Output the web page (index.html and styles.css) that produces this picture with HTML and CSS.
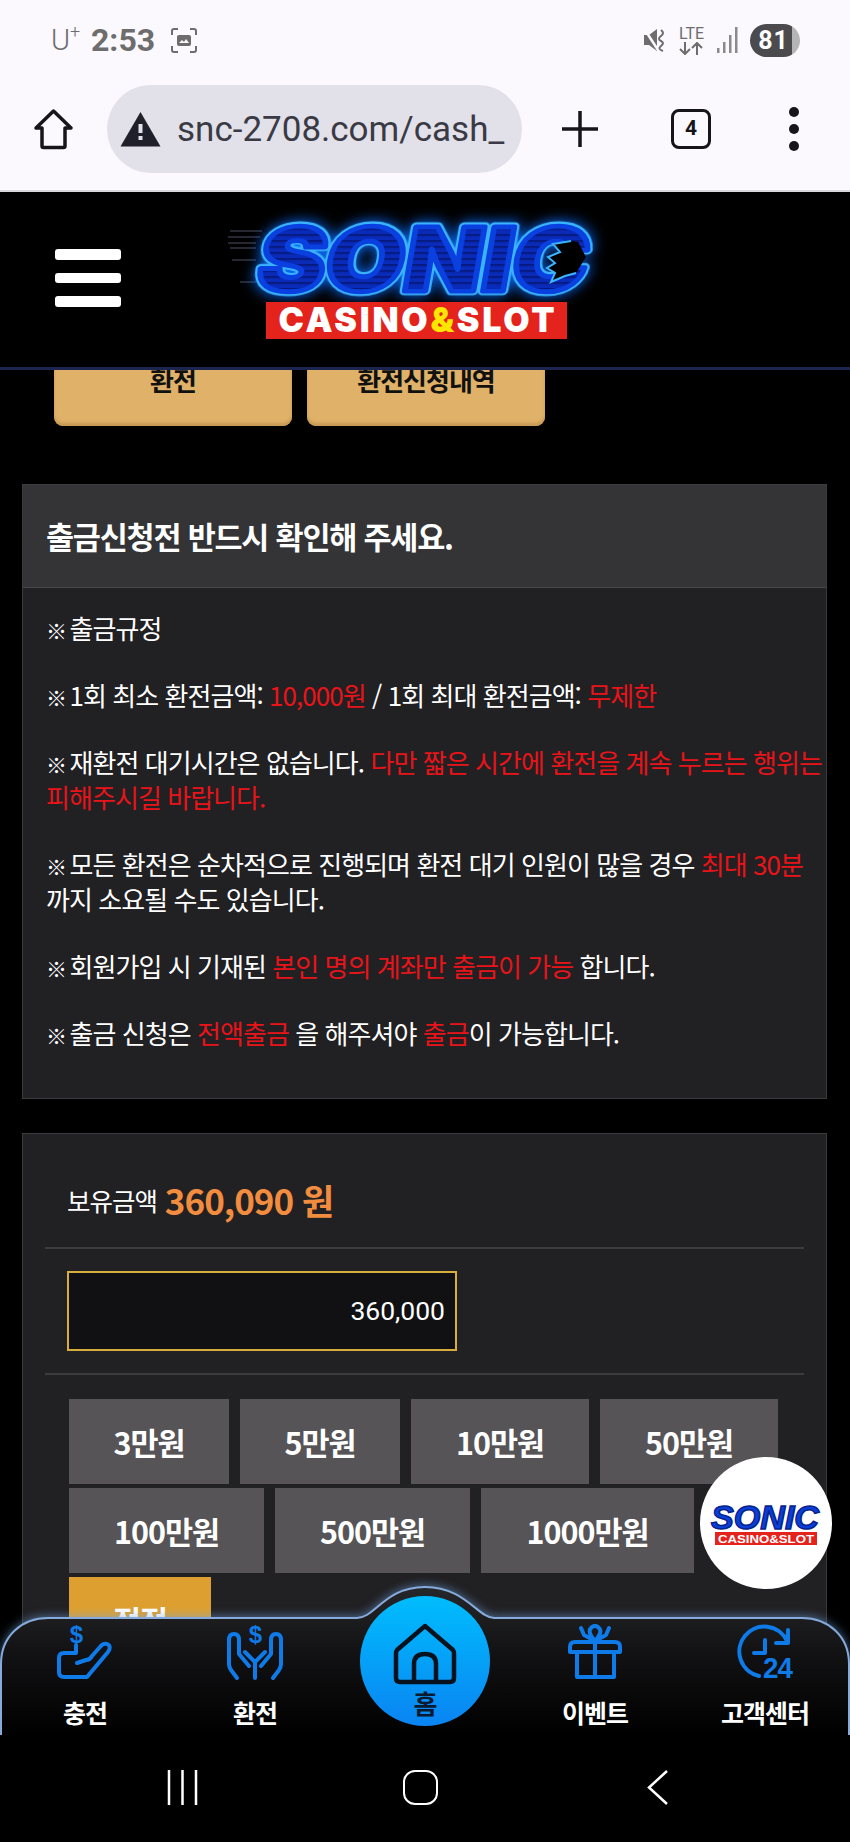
FILE: index.html
```html
<!DOCTYPE html>
<html lang="ko">
<head>
    <meta charset="UTF-8">
    <meta name="viewport" content="width=device-width, initial-scale=1.0">
    <title>SONIC CASINO&amp;SLOT</title>
    <link rel="stylesheet" href="styles.css">
</head>
<body>
<div class="screen">
    <div class="status-bar">
        <span class="carrier">U<sup>+</sup></span>
        <span class="clock">2:53</span>
        <svg class="capture" width="28" height="27" viewBox="0 0 28 27">
            <path d="M2 8V4Q2 2 4 2H8M20 2H24Q26 2 26 4V8M26 19V23Q26 25 24 25H20M8 25H4Q2 25 2 23V19" fill="none" stroke="#6d6d6d" stroke-width="2"/>
            <rect x="7" y="8" width="14" height="11" rx="2" fill="#6d6d6d"/>
            <path d="M9 16l3-3 2 2 2-3 3 4z" fill="#fafafa"/>
        </svg>
        <div class="status-right">
            <svg width="24" height="26" viewBox="0 0 24 26">
                <path d="M1 8H6L14 2V24L6 18H1Z" fill="#6d6d6d"/>
                <path d="M2 3L15 23" stroke="#fbf9fe" stroke-width="2.500"/>
                <path d="M18 3Q22 6 18 9T18 14T18 19T20 24" fill="none" stroke="#6d6d6d" stroke-width="2"/>
            </svg>
            <div class="lte">
                LTE
                <svg width="26" height="13" viewBox="0 0 26 13">
                    <path d="M7 0V12M2 7L7 12L12 7M19 13V1M14 6L19 1L24 6" fill="none" stroke="#6d6d6d" stroke-width="2"/>
                </svg>
            </div>
            <svg width="23" height="28" viewBox="0 0 23 28">
                <rect x="1" y="22" width="2.500" height="5" fill="#8a8a8a"/>
                <rect x="7" y="16" width="2.500" height="11" fill="#8a8a8a"/>
                <rect x="13" y="9" width="2.500" height="18" fill="#8a8a8a"/>
                <rect x="19" y="1" width="2.500" height="26" fill="#8a8a8a"/>
            </svg>
            <div class="battery">81</div>
        </div>
    </div>

    <div class="toolbar">
        <svg class="tb-home" width="41" height="42" viewBox="0 0 41 42">
            <path d="M20.500 3L3 20H9V38Q9 39.500 10.500 39.500H30.500Q32 39.500 32 38V20H38Z" fill="none" stroke="#16161a" stroke-width="3.500" stroke-linejoin="round"/>
        </svg>
        <div class="url-pill">
            <svg width="41" height="36" viewBox="0 0 41 36">
                <path d="M20.500 1L40.500 35.500H.5Z" fill="#20202a"/>
                <rect x="18.500" y="13" width="4" height="9" fill="#e2e1ea"/>
                <rect x="18.500" y="25" width="4" height="4" fill="#e2e1ea"/>
            </svg>
            <span class="url-text">snc-2708.com/cash_</span>
        </div>
        <svg class="tb-plus" width="36" height="36" viewBox="0 0 36 36">
            <path d="M18 0V36M0 18H36" stroke="#16161a" stroke-width="3.500"/>
        </svg>
        <div class="tab-count">4</div>
        <div class="tb-dots"><i></i><i></i><i></i></div>
    </div>

    <header class="site-header">
        <div class="hamburger"><i></i><i></i><i></i></div>
        <svg class="logo" width="390" height="135" viewBox="0 0 390 135">
            <defs>
                <pattern id="scan" width="6" height="6" patternUnits="userSpaceOnUse">
                    <rect width="6" height="6" fill="#0a2ab8"/>
                    <rect width="6" height="2" fill="#061a80"/>
                </pattern>
                <text id="sonicWord" x="33" y="81" font-size="88" textLength="330" lengthAdjust="spacingAndGlyphs">SONIC</text>
            </defs>
            <g class="speed-lines">
                <path d="M10 21H42M8 27H40M8 33H36M10 38H36M12 50H36M20 72H36"/>
            </g>
            <g transform="translate(15 0) skewX(-10)">
                <g class="sonic-glow">
                    <use href="#sonicWord" class="word-outline"/>
                </g>
                <use href="#sonicWord" class="word-fill"/>
            </g>
            <path class="c-notch" d="M358 32L351 31L333 34L340 42L328 47L335 53L327 58L335 63L331 72L345 66L356 63L366 47Z"/>
            <path class="c-notch-edge" d="M351 31L333 34L340 42L328 47L335 53L327 58L335 63L331 72L345 66L356 63"/>
            <rect class="tag" x="46" y="92" width="301" height="37"/>
            <text class="tag-text" x="196.500" y="122" text-anchor="middle" textLength="276" lengthAdjust="spacing">CASINO<tspan class="tag-amp">&amp;</tspan>SLOT</text>
        </svg>
    </header>

    <main class="content">
        <div class="top-buttons">
            <a class="gold-btn">환전</a>
            <a class="gold-btn">환전신청내역</a>
        </div>

        <section class="panel notice">
            <h2 class="panel-title">출금신청전 반드시 확인해 주세요.</h2>
            <div class="notice-body">
                <p><span class="mark">※</span>출금규정</p>
                <p><span class="mark">※</span>1회 최소 환전금액: <em>10,000원</em> / 1회 최대 환전금액: <em>무제한</em></p>
                <p><span class="mark">※</span>재환전 대기시간은 없습니다. <em>다만 짧은 시간에 환전을 계속 누르는 행위는 피해주시길 바랍니다.</em></p>
                <p><span class="mark">※</span>모든 환전은 순차적으로 진행되며 환전 대기 인원이 많을 경우 <em>최대 30분</em> 까지 소요될 수도 있습니다.</p>
                <p><span class="mark">※</span>회원가입 시 기재된 <em>본인 명의 계좌만 출금이 가능</em> 합니다.</p>
                <p><span class="mark">※</span>출금 신청은 <em>전액출금</em> 을 해주셔야 <em>출금</em>이 가능합니다.</p>
            </div>
        </section>

        <section class="panel cash">
            <div class="balance"><span>보유금액</span> <strong>360,090 원</strong></div>
            <div class="amount-row"><div class="amount-input">360,000</div></div>
            <div class="chips">
                <div class="chip-row">
                    <a class="chip w160">3만원</a>
                    <a class="chip w160">5만원</a>
                    <a class="chip w178">10만원</a>
                    <a class="chip w178">50만원</a>
                </div>
                <div class="chip-row">
                    <a class="chip w195">100만원</a>
                    <a class="chip w195">500만원</a>
                    <a class="chip w213">1000만원</a>
                </div>
                <div class="chip-row">
                    <a class="chip reset">정정</a>
                </div>
            </div>
        </section>
    </main>

    <div class="float-logo">
        <svg width="118" height="46" viewBox="0 0 118 46">
            <text class="mini-word" x="4" y="29" font-size="34" textLength="108" lengthAdjust="spacingAndGlyphs">SONIC</text>
            <rect class="tag" x="8" y="32" width="102" height="13"/>
            <text class="mini-tag" x="59" y="43" text-anchor="middle" textLength="96" lengthAdjust="spacingAndGlyphs">CASINO&amp;SLOT</text>
        </svg>
    </div>

    <nav class="bottom-nav">
        <svg class="nav-shape" width="850" height="149" viewBox="0 0 850 149">
            <defs>
                <linearGradient id="navBg" x1="0" y1="0" x2="0" y2="1">
                    <stop offset="0" stop-color="#26272a"/>
                    <stop offset="0.45" stop-color="#121214"/>
                    <stop offset="1" stop-color="#000"/>
                </linearGradient>
            </defs>
            <path d="M1 149V78C1 50 22 32 48 32H357C375 32 385 1 425 1C465 1 478 32 494 32H802C828 32 849 50 849 78V149" fill="url(#navBg)" stroke="#86aadb" stroke-width="2"/>
        </svg>
        <a class="nav-item">
            <svg class="nav-icon" width="60" height="56" viewBox="15 14 60 56">
                <text x="36" y="33" text-anchor="middle" class="ic-dollar">$</text>
                <path d="M36 35V43H24Q19 43 19 48V62Q19 67 24 67H47L68 42Q72 36 67 34Q63 33 60 37L52 46Q50 50 46 50L37 53"/>
            </svg>
            <span>충전</span>
        </a>
        <a class="nav-item">
            <svg class="nav-icon" width="60" height="56" viewBox="185 14 60 56">
                <text x="215" y="33" text-anchor="middle" class="ic-dollar">$</text>
                <path d="M197 68L191 60Q189 57 189 54V30Q189 24 194 24Q199 24 199 30V44L209 56M233 68L239 60Q241 57 241 54V30Q241 24 236 24Q231 24 231 30V44L221 56M215 68V52L205 42M215 52L225 42"/>
            </svg>
            <span>환전</span>
        </a>
        <a class="nav-item home">
            <div class="home-circle">
                <svg width="130" height="98" viewBox="10 14 130 98">
                    <path d="M75 44L47 68Q46 69 46 72V96Q46 100 50 100H100Q104 100 104 96V72Q104 69 103 68ZM64 100V82Q64 72 75 72Q86 72 86 82V100"/>
                </svg>
                <span>홈</span>
            </div>
        </a>
        <a class="nav-item">
            <svg class="nav-icon" width="60" height="56" viewBox="15 14 60 56">
                <path d="M25 42H20V37Q20 32 25 32H65Q70 32 70 37V42ZM27 43V67H64V43M45 32V67M45 31L34 25L31 18M45 31L56 25L59 18M45 31Q37 22 41 18Q45 14 49 18Q53 22 45 31"/>
            </svg>
            <span>이벤트</span>
        </a>
        <a class="nav-item">
            <svg class="nav-icon" width="60" height="56" viewBox="185 14 60 56">
                <path d="M237 31A25 25 0 1 0 209 66M238 20V33H226M215 30V43H204"/>
                <text x="213" y="68" class="ic-24" textLength="29" lengthAdjust="spacingAndGlyphs">24</text>
            </svg>
            <span>고객센터</span>
        </a>
    </nav>

    <div class="system-nav">
        <svg class="sys-recents" width="31" height="35" viewBox="0 0 31 35">
            <path d="M2 0V35M15.500 0V35M29 0V35" stroke="#fff" stroke-width="2.500"/>
        </svg>
        <div class="sys-home"></div>
        <svg class="sys-back" width="22" height="35" viewBox="0 0 22 35">
            <path d="M20 1L2 17.500L20 34" fill="none" stroke="#fff" stroke-width="2.500"/>
        </svg>
    </div>
</div>
</body>
</html>
```

FILE: styles.css
```css
* {
    box-sizing: border-box;
}
html, body {
    margin: 0;
    padding: 0;
    background-color: #000;
}
.screen {
    position: relative;
    display: flex;
    flex-direction: column;
    width: 850px;
    height: 1842px;
    overflow: hidden;
    font-family: "Noto Sans CJK KR", "Noto Sans", sans-serif;
    color: #fff;
}

/* phone status bar */
.status-bar {
    display: flex;
    align-items: center;
    height: 80px;
    padding-left: 51px;
    background-color: #fbf9fe;
    color: #6d6d6d;
    font-family: "Roboto", sans-serif;
}
.carrier {
    font-size: 29px;
    font-weight: 300;
    width: 40px;
}
.carrier sup {
    font-size: 18px;
    line-height: 0;
    vertical-align: 12px;
}
.clock {
    font-size: 32px;
    font-weight: 700;
    width: 79px;
}
.status-right {
    display: flex;
    align-items: center;
    margin-left: auto;
    margin-right: 50px;
    gap: 11px;
}
.lte {
    width: 27px;
    font-size: 16px;
    line-height: 16px;
    text-align: center;
}
.lte svg {
    display: block;
}
.battery {
    width: 50px;
    height: 33px;
    border-radius: 17px;
    background: linear-gradient(90deg, #4b4b4d 84%, #b5b5b5 84%);
    color: #fff;
    font-size: 25px;
    font-weight: 700;
    line-height: 33px;
    text-align: center;
    letter-spacing: 1px;
    padding-right: 3px;
}

/* browser toolbar */
.toolbar {
    display: flex;
    align-items: center;
    height: 112px;
    padding: 6px 0 18px 33px;
    background-color: #fbf9fe;
    border-bottom: 2px solid #d8d8da;
}
.url-pill {
    display: flex;
    align-items: center;
    width: 415px;
    height: 88px;
    margin-left: 33px;
    padding-left: 13px;
    gap: 16px;
    border-radius: 44px;
    background-color: #e2e1ea;
    overflow: hidden;
}
.url-text {
    font-family: "Roboto", sans-serif;
    font-size: 35px;
    color: #3a3a44;
    white-space: nowrap;
}
.tb-plus {
    margin-left: 40px;
}
.tab-count {
    width: 40px;
    height: 40px;
    margin-left: 73px;
    border: 3.5px solid #16161a;
    border-radius: 8px;
    color: #16161a;
    font-family: "Roboto", sans-serif;
    font-size: 21px;
    font-weight: 700;
    line-height: 33px;
    text-align: center;
}
.tb-dots {
    display: flex;
    flex-direction: column;
    gap: 7px;
    margin-left: 78px;
}
.tb-dots i {
    display: block;
    width: 10px;
    height: 10px;
    border-radius: 50%;
    background-color: #16161a;
}

/* site header */
.site-header {
    position: relative;
    z-index: 2;
    display: flex;
    align-items: flex-start;
    height: 178px;
    padding-left: 55px;
    background-color: #000;
    border-bottom: 3px solid #1c2450;
}
.hamburger {
    display: flex;
    flex-direction: column;
    gap: 13px;
    margin-top: 57px;
}
.hamburger i {
    display: block;
    width: 66px;
    height: 10.5px;
    border-radius: 3px;
    background-color: #fff;
}
.logo {
    margin: 18px 0 0 99px;
    overflow: visible;
}
.speed-lines path {
    fill: none;
    stroke: #4a5060;
    stroke-width: 1;
}
#sonicWord {
    font-family: "Inter", "Liberation Sans", sans-serif;
    font-weight: 900;
}
.sonic-glow {
    filter: drop-shadow(0 0 7px #0a6cff);
}
.word-outline {
    fill: #3ab4ff;
    stroke: #3ab4ff;
    stroke-width: 9;
    stroke-linejoin: round;
}
.word-fill {
    fill: url(#scan);
    stroke: #0a3fe0;
    stroke-width: 5;
    stroke-linejoin: round;
}
.c-notch {
    fill: #000;
}
.c-notch-edge {
    fill: none;
    stroke: #3ab4ff;
    stroke-width: 2;
}
.tag {
    fill: #e5231d;
}
.tag-text {
    font-family: "Inter", "Liberation Sans", sans-serif;
    font-size: 34px;
    font-weight: 900;
    fill: #fff;
}
.tag-amp {
    fill: #ffe600;
}

/* page content */
.content {
    flex: 1;
    margin-top: -35px;
    min-height: 0;
}
.top-buttons {
    display: flex;
    gap: 15px;
    padding-left: 54px;
}
.gold-btn {
    display: flex;
    align-items: center;
    justify-content: center;
    width: 238px;
    height: 91px;
    padding-bottom: 2px;
    border-radius: 9px;
    background-color: #dfb169;
    box-shadow: inset 0 -3px 3px #c79a55;
    color: #111;
    font-size: 26px;
    font-weight: 700;
    letter-spacing: -1px;
}
.panel {
    width: 805px;
    margin-left: 22px;
    border: 1px solid #3b3b3e;
    background-color: #212023;
}
.notice {
    margin-top: 58px;
}
.panel-title {
    display: flex;
    align-items: center;
    height: 103px;
    margin: 0;
    padding-left: 23px;
    background-color: #343437;
    border-bottom: 1px solid #47474a;
    font-size: 30.5px;
    font-weight: 700;
    letter-spacing: -1.2px;
}
.notice-body {
    padding: 22px 2px 16px 23px;
}
.notice-body p {
    margin: 0 0 32px;
    font-size: 26px;
    line-height: 35px;
    letter-spacing: -0.95px;
    word-break: keep-all;
}
.notice-body em {
    font-style: normal;
    color: #e8141a;
}
.mark {
    display: inline-block;
    width: 23.5px;
    font-size: 21px;
    font-weight: 700;
    line-height: 1;
}

.cash {
    height: 700px;
    margin-top: 34px;
    padding: 0 22px;
}
.balance {
    display: flex;
    align-items: center;
    gap: 8px;
    height: 115px;
    padding: 18px 0 0 22px;
    border-bottom: 2px solid #3c3c40;
    font-size: 25.5px;
    letter-spacing: -1px;
}
.balance strong {
    color: #f28c3f;
    font-size: 35px;
    font-weight: 700;
}
.amount-row {
    height: 126px;
    padding: 22px 0 0 22px;
    border-bottom: 2px solid #3c3c40;
}
.amount-input {
    width: 390px;
    height: 80px;
    padding-right: 10px;
    background-color: #111113;
    border: 2px solid #d9ad3c;
    font-family: "Roboto", sans-serif;
    font-size: 26.5px;
    line-height: 76px;
    text-align: right;
}
.chips {
    padding: 24px 0 0 24px;
}
.chip-row {
    display: flex;
    gap: 11px;
    margin-bottom: 4px;
}
.chip {
    display: flex;
    align-items: center;
    justify-content: center;
    height: 85px;
    background-color: #565457;
    font-size: 30.5px;
    font-weight: 700;
    letter-spacing: -1px;
}
.w160 { width: 160px; }
.w178 { width: 178px; }
.w195 { width: 195px; }
.w213 { width: 213px; }
.reset {
    width: 142px;
    background-color: #dda030;
}

/* floating logo button */
.float-logo {
    position: absolute;
    left: 700px;
    top: 1457px;
    z-index: 3;
    display: flex;
    align-items: center;
    justify-content: center;
    width: 132px;
    height: 132px;
    border-radius: 50%;
    background-color: #fff;
}
.mini-word {
    font-family: "Liberation Sans", sans-serif;
    font-weight: 700;
    font-style: italic;
    fill: #0a3fd8;
    stroke: #06228c;
    stroke-width: 1.5;
}
.mini-tag {
    font-family: "Liberation Sans", sans-serif;
    font-size: 11px;
    font-weight: 700;
    fill: #fff;
}

/* bottom nav */
.bottom-nav {
    position: absolute;
    left: 0;
    top: 1586px;
    z-index: 4;
    display: grid;
    grid-template-columns: repeat(5, 170px);
    width: 850px;
    height: 149px;
}
.nav-shape {
    position: absolute;
    left: 0;
    top: 0;
    filter: drop-shadow(0 -1px 5px rgba(110, 165, 230, .55));
}
.nav-item {
    position: relative;
    display: flex;
    flex-direction: column;
    align-items: center;
    padding-top: 38px;
    font-size: 25px;
    font-weight: 700;
    letter-spacing: -1px;
}
.nav-item > span {
    margin-top: 17px;
    line-height: 30px;
}
.nav-icon path {
    fill: none;
    stroke: #0f7be8;
    stroke-width: 4;
    stroke-linecap: round;
    stroke-linejoin: round;
}
.ic-dollar {
    font-family: "Liberation Sans", sans-serif;
    font-size: 24px;
    font-weight: 700;
    fill: #0f7be8;
}
.ic-24 {
    font-family: "Liberation Sans", sans-serif;
    font-size: 29px;
    font-weight: 700;
    fill: #0f7be8;
}
.nav-item.home {
    padding-top: 10px;
}
.home-circle {
    display: flex;
    flex-direction: column;
    align-items: center;
    width: 130px;
    height: 130px;
    border-radius: 50%;
    background: linear-gradient(180deg, #00bdfd 0%, #0a84f2 100%);
    color: #0a1a30;
}
.home-circle svg {
    flex: none;
}
.home-circle path {
    fill: none;
    stroke: #07121f;
    stroke-width: 4.5;
    stroke-linejoin: round;
}
.home-circle span {
    margin-top: -6px;
    font-size: 26px;
    line-height: 30px;
}

/* android nav */
.system-nav {
    position: absolute;
    left: 0;
    bottom: 0;
    z-index: 4;
    display: flex;
    align-items: flex-start;
    width: 850px;
    height: 107px;
    padding: 35px 0 0 167px;
    background-color: #000;
}
.sys-home {
    width: 35px;
    height: 35px;
    margin-left: 205px;
    border: 2.5px solid #fff;
    border-radius: 12px;
}
.sys-back {
    margin-left: 209px;
}
```
